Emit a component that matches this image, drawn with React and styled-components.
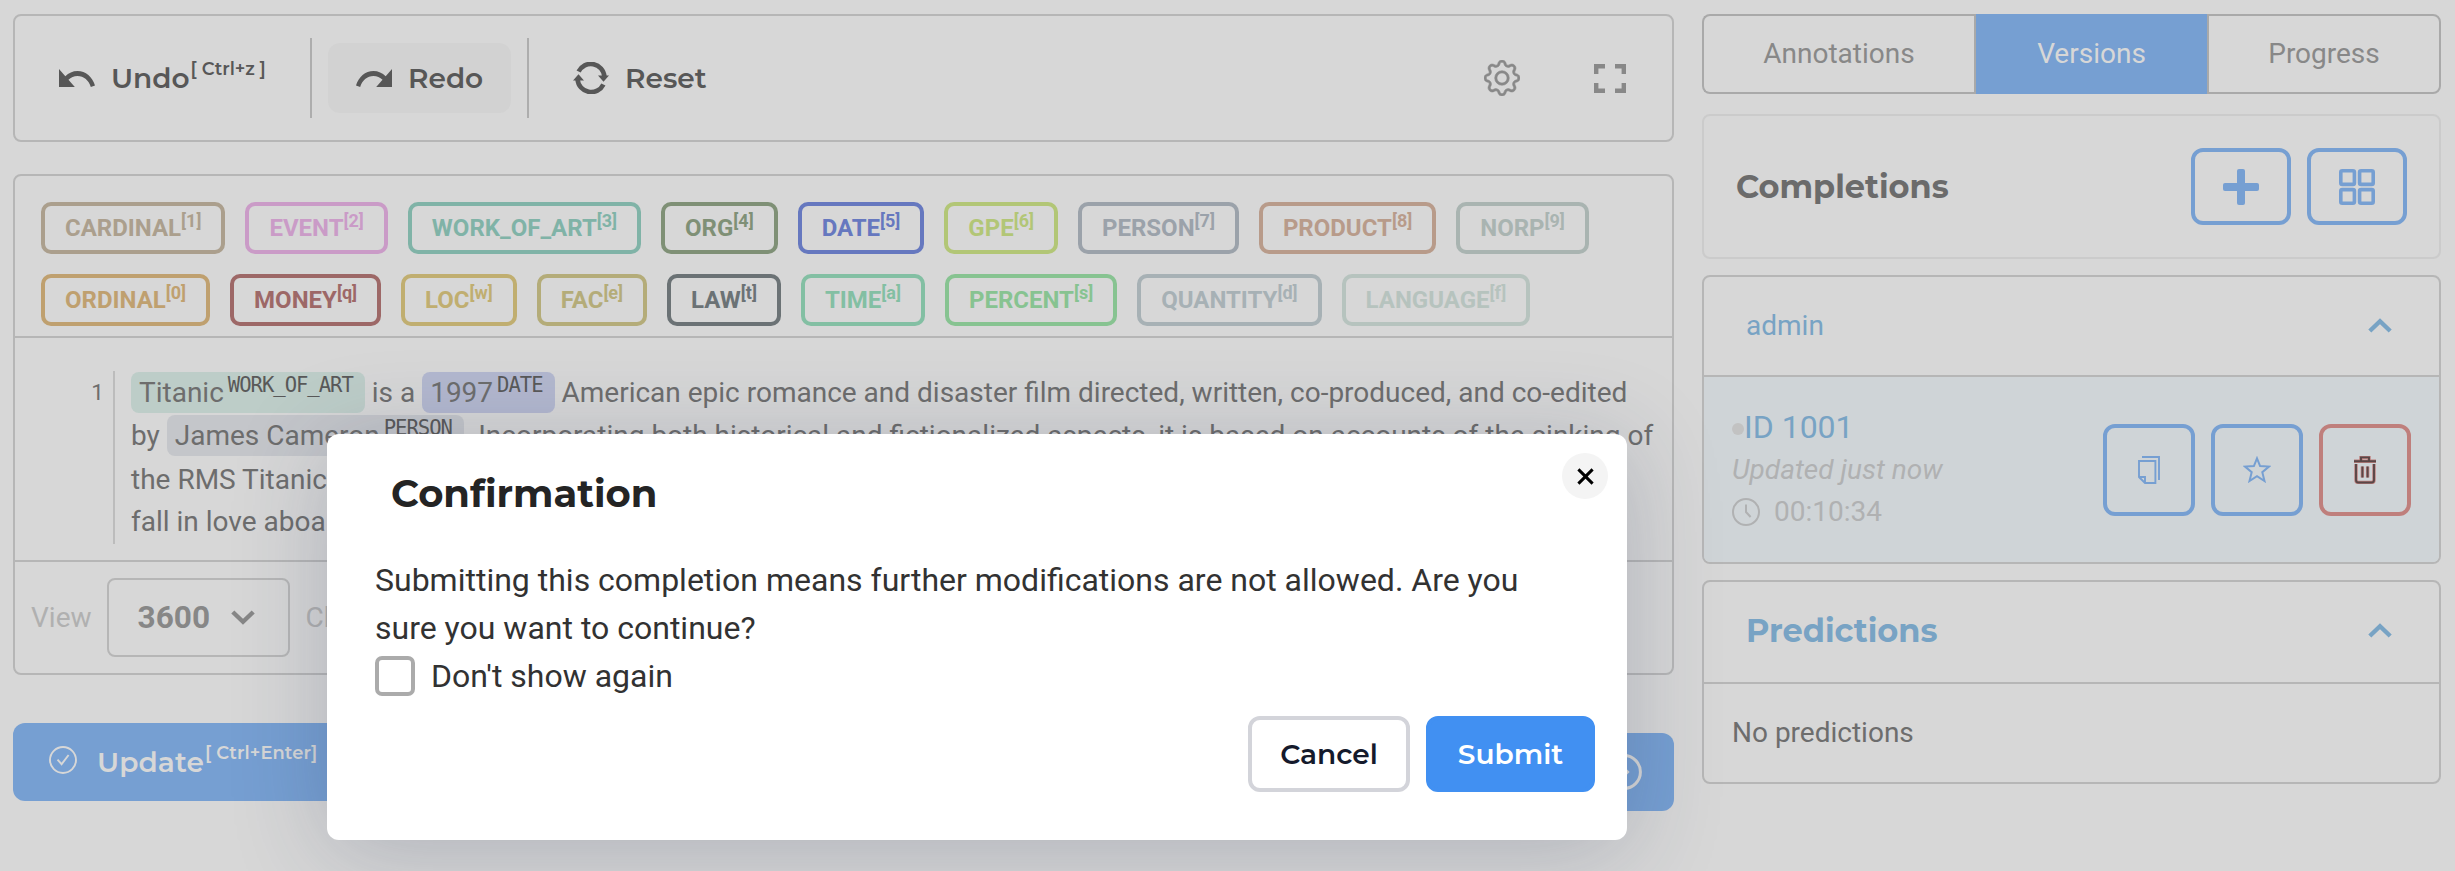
import React from "react";
import styled, { createGlobalStyle, css } from "styled-components";
import { BsGear } from "react-icons/bs";

const heading = `Montserrat, Inter, sans-serif`;
const body = `Roboto, sans-serif`;
const c = {
  page: "#d7d7d7",
  line: "#b6b6b6",
  blue: "#769fd2",
  steel: "#78a3c4",
  onBlue: "#d7d7d7",
  dark: "#575757",
  text: "#6d6d6d",
  muted: "#b0b0b0",
};

const GlobalStyle = createGlobalStyle`
  *, *::before, *::after { box-sizing: border-box; }
  body { margin: 0; background: ${c.page}; font-family: ${body}; overflow: hidden; }
  button { font: inherit; color: inherit; background: none; border: 0; padding: 0; margin: 0; }
  h1, h2, p { margin: 0; }
  svg { display: block; flex: none; }
`;

const Page = styled.div`
  position: relative;
  display: grid;
  grid-template-columns: 1661px 739px;
  column-gap: 28px;
  align-items: start;
  height: 871px;
  padding: 14px 14px 0 13px;
  overflow: hidden;
`;
const Column = styled.div`
  display: flex;
  flex-direction: column;
`;
const Panel = styled.section`
  border: 2px solid ${(p) => p.$line || c.line};
  border-radius: 8px;
`;

/* Toolbar */
const Toolbar = styled(Panel)`
  display: flex;
  align-items: center;
  height: 128px;
  padding: 0 46px 0 0;
`;
const ToolButton = styled.button`
  display: flex;
  align-items: center;
  gap: 16px;
  height: 70px;
  width: ${(p) => p.$width}px;
  margin: 0 16px;
  padding-left: 28px;
  border-radius: 12px;
  background: ${(p) => (p.$active ? "#d2d2d2" : "none")};
  color: ${c.dark};
  font: 600 28px/40px ${heading};
  white-space: nowrap;
`;
const Divider = styled.div`
  width: 2px;
  height: 80px;
  background: #adadad;
`;
const Key = styled.sup`
  position: relative;
  top: -13.5px;
  margin-left: 1px;
  font-size: ${(p) => p.$size || 17.9}px;
  font-weight: 600;
  line-height: 0;
  vertical-align: baseline;
`;
const ToolIcons = styled.div`
  display: flex;
  align-items: center;
  gap: 74px;
  margin-left: auto;
  color: #888;
`;

/* Editor */
const Editor = styled(Panel)`
  height: 501px;
  margin-top: 32px;
`;
const Labels = styled.div`
  display: flex;
  flex-direction: column;
  gap: 20px;
  padding: 26px 26px 10px;
  border-bottom: 2px solid ${c.line};
`;
const LabelRow = styled.div`
  display: flex;
  gap: 20px;
`;
const Label = styled.button`
  height: 52px;
  padding: 0 20px;
  border: 4px solid ${(p) => p.$color};
  border-radius: 10px;
  color: ${(p) => p.$color};
  font: 700 24px/44px ${body};
  sup {
    position: relative;
    top: -9px;
    font-size: 18px;
    line-height: 0;
    vertical-align: baseline;
  }
`;
const Document = styled.div`
  display: flex;
  height: 224px;
  padding-top: 32.5px;
  border-bottom: 2px solid ${c.line};
  color: ${c.text};
`;
const LineNumber = styled.div`
  width: 98px;
  padding-right: 9px;
  text-align: right;
  font-size: 22.5px;
  line-height: 43.5px;
`;
const Lines = styled.div`
  height: 173px;
  padding-left: 16px;
  border-left: 2px solid #bcbcbc;
  font-size: 28px;
`;
const Line = styled.p`
  height: 43.5px;
  line-height: 43.5px;
  white-space: nowrap;
  &:last-child { height: 42px; line-height: 42px; }
`;
const Entity = styled.span`
  padding: 4px 12px 4px 8px;
  border-radius: 8px;
  background: ${(p) => p.$bg};
  sup {
    position: relative;
    top: -10px;
    margin-left: 4px;
    color: #595959;
    font-family: "DejaVu Sans Mono", monospace;
    font-size: 20.6px;
    letter-spacing: -1.04px;
    line-height: 0;
    vertical-align: baseline;
  }
`;
const EditorFooter = styled.div`
  display: flex;
  align-items: center;
  height: 111px;
  padding-left: 16px;
  color: ${c.muted};
  font-size: 28px;
`;
const Select = styled.button`
  display: flex;
  align-items: center;
  gap: 21px;
  width: 183px;
  height: 79px;
  margin: 0 16px 0 15px;
  padding-left: 29px;
  border: 2px solid ${c.line};
  border-radius: 8px;
  color: #878787;
  font-size: 31.6px;
  font-weight: 700;
`;
const Actions = styled.div`
  display: flex;
  justify-content: space-between;
  margin-top: 48px;
`;
const ActionButton = styled.button`
  display: flex;
  align-items: center;
  justify-content: ${(p) => (p.$end ? "flex-end" : "flex-start")};
  width: ${(p) => p.$width}px;
  height: 78px;
  margin-top: ${(p) => (p.$end ? 10 : 0)}px;
  padding: 0 32px 0 36px;
  gap: 20px;
  border-radius: 12px;
  background: ${c.blue};
  color: ${c.onBlue};
  font: 600 28px/40px ${heading};
  letter-spacing: 0.1px;
  white-space: nowrap;
  svg { margin-bottom: ${(p) => (p.$end ? 0 : 4)}px; }
`;

/* Sidebar */
const Tabs = styled.div`
  display: flex;
  height: 80px;
`;
const Tab = styled.button`
  width: ${(p) => p.$width}px;
  padding-bottom: 2px;
  border: 2px solid #a9a9a9;
  color: #888;
  font-size: 28px;
  &:first-child { border-right: 0; border-radius: 8px 0 0 8px; }
  &:last-child { border-radius: 0 8px 8px 0; }
  ${(p) =>
    p.$active &&
    css`
      border-width: 0 0 0 2px;
      background: ${c.blue};
      background-clip: padding-box;
      color: ${c.onBlue};
    `}
`;
const Completions = styled(Panel)`
  display: flex;
  align-items: center;
  gap: 16px;
  height: 145px;
  margin-top: 20px;
  padding: 0 32px 0 32px;
  color: #6b6b6b;
`;
const Title = styled.h2`
  flex: 1;
  font: 700 32px/40px ${heading};
`;
const IconButton = styled.button`
  display: flex;
  align-items: center;
  justify-content: center;
  width: ${(p) => p.$w}px;
  height: ${(p) => p.$h}px;
  border: 4px solid ${(p) => p.$color || c.blue};
  border-radius: 12px;
  color: ${c.blue};
`;
const Group = styled(Panel)`
  margin-top: 16px;
  overflow: hidden;
`;
const GroupHeader = styled.header`
  display: flex;
  align-items: center;
  justify-content: space-between;
  height: ${(p) => p.$h}px;
  padding: 0 47px ${(p) => p.$lift || 0}px 42px;
  border-bottom: 2px solid ${c.line};
  color: ${c.steel};
  font-size: 28px;
`;
const Version = styled.div`
  display: flex;
  align-items: center;
  gap: 16px;
  height: 185px;
  padding: 0 28px;
  background: #cfd4d7;
`;
const VersionInfo = styled.div`
  flex: 1;
  padding-bottom: 2px;
  color: #b0b1b2;
  font-size: 28px;
`;
const VersionId = styled.div`
  display: flex;
  align-items: center;
  color: ${c.steel};
  font-size: 32px;
  line-height: 46px;
`;
const Dot = styled.span`
  width: 12px;
  height: 12px;
  margin-top: 5px;
  border-radius: 50%;
  background: #c2c2c2;
`;
const Updated = styled.div`
  font-style: italic;
  line-height: 40px;
`;
const Time = styled.div`
  display: flex;
  align-items: center;
  gap: 14px;
  line-height: 44px;
`;
const Empty = styled.div`
  height: 98px;
  padding-left: 28px;
  color: ${c.text};
  font-size: 28px;
  line-height: 97px;
`;

/* Dialog */
const Dialog = styled.div`
  position: absolute;
  left: 327px;
  top: 434px;
  width: 1300px;
  height: 406px;
  padding: 36px 32px 0 48px;
  border-radius: 12px;
  background: #fff;
  color: #323232;
  box-shadow: 0 12px 96px rgba(40, 50, 85, 0.23);
`;
const DialogTitle = styled.h1`
  padding-left: 16px;
  color: #242424;
  font: 700 38.5px/48px ${heading};
`;
const DialogText = styled.p`
  width: 1180px;
  margin-top: 38px;
  font-size: 32px;
  line-height: 48px;
`;
const CheckRow = styled.label`
  display: flex;
  align-items: center;
  gap: 16px;
  height: 48px;
  font-size: 32px;
`;
const Checkbox = styled.span`
  width: 40px;
  height: 40px;
  border: 4px solid #ababab;
  border-radius: 7px;
`;
const DialogActions = styled.div`
  display: flex;
  justify-content: flex-end;
  gap: 16px;
  margin-top: 16px;
`;
const DialogButton = styled.button`
  width: ${(p) => (p.$primary ? 169 : 162)}px;
  height: 76px;
  padding-bottom: 1px;
  border: 4px solid ${(p) => (p.$primary ? "#4190f2" : "#d3d4da")};
  border-radius: 12px;
  background: ${(p) => (p.$primary ? "#4190f2" : "#fff")};
  color: ${(p) => (p.$primary ? "#fff" : "#151a2c")};
  font: 600 28px/60px ${heading};
`;
const Close = styled.button`
  position: absolute;
  top: 19px;
  right: 19px;
  display: flex;
  align-items: center;
  justify-content: center;
  width: 46px;
  height: 46px;
  border-radius: 50%;
  background: #f4f4f4;
`;

const UndoIcon = ({ flip }) => (
  <svg width="36" height="18" viewBox="2 7 20.47 9" preserveAspectRatio="none" fill="currentColor">
    <path
      transform={flip ? "translate(24.47 0) scale(-1 1)" : undefined}
      d="M12.5 8c-2.65 0-5.05.99-6.9 2.6L2 7v9h9l-3.62-3.62c1.39-1.16 3.16-1.88 5.12-1.88 3.54 0 6.55 2.31 7.6 5.5l2.37-.78C21.08 11.03 17.15 8 12.5 8z"
    />
  </svg>
);
const ResetIcon = () => (
  <svg width="36" height="32" viewBox="0 0 36 32" fill="none">
    <g stroke="currentColor" strokeWidth="4.6">
      <path d="M5.6 9.6A13.6 13.6 0 0 1 31.4 14.5" />
      <path d="M30.4 22.4A13.6 13.6 0 0 1 4.6 17.5" />
    </g>
    <path fill="currentColor" d="M25 13.5h11l-5.5 6.2zM0 18.5h11L5.5 12.3z" />
  </svg>
);
const FullscreenIcon = () => (
  <svg width="32" height="29" viewBox="0 0 32 29" fill="none" stroke="currentColor" strokeWidth="4.4">
    <path d="M11 2.2H2.2V10M21 2.2h8.8V10M11 26.8H2.2V19M21 26.8h8.8V19" />
  </svg>
);
const PlusIcon = () => (
  <svg width="36" height="36" viewBox="0 0 36 36" fill="currentColor">
    <rect x="14" width="8" height="36" rx="2" />
    <rect y="14" width="36" height="8" rx="2" />
  </svg>
);
const GridIcon = () => (
  <svg width="36" height="36" viewBox="0 0 36 36" fill="none" stroke="currentColor" strokeWidth="3.6">
    {[1.8, 20.6].map((x) =>
      [1.8, 20.6].map((y) => <rect key={`${x}-${y}`} x={x} y={y} width="13.6" height="13.6" rx="1.5" />)
    )}
  </svg>
);
const CopyIcon = () => (
  <svg width="22" height="28" viewBox="0 0 22 28" fill="none" stroke="currentColor" strokeWidth="1.9">
    <path d="M4 1H21V24" />
    <path d="M1 5H17.4V27H7L1 21ZM1 21H7V27" />
  </svg>
);
const StarIcon = () => (
  <svg width="28" height="27" viewBox="0 0 28 27" fill="none" stroke="currentColor" strokeWidth="2">
    <path d="M14 2.3 17.1 10 26 10.6 19.3 16.2 21.5 25 14 20.2 6.5 25 8.7 16.2 2 10.6 10.9 10Z" />
  </svg>
);
const trash = "M1 5.2H23M8 5V1.4H16V5M3 8V24Q3 26.5 5.5 26.5H18.5Q21 26.5 21 24V8M9.4 10.5V21.5M14.6 10.5V21.5";
const TrashIcon = () => (
  <svg width="24" height="28" viewBox="0 0 24 28" fill="none">
    <path d={trash} stroke="#bd7f7d" strokeWidth="3.4" />
    <path d={trash} stroke="#594747" strokeWidth="1.9" />
  </svg>
);
const ClockIcon = () => (
  <svg width="28" height="28" viewBox="0 0 28 28" fill="none" stroke="currentColor" strokeWidth="2">
    <circle cx="14" cy="14" r="13" />
    <path d="M14 6.5V14L18.6 19" />
  </svg>
);
const CheckIcon = () => (
  <svg width="28" height="28" viewBox="0 0 28 28" fill="none" stroke="currentColor" strokeWidth="1.9">
    <circle cx="14" cy="14" r="13" />
    <path d="M8.5 13.6 12.6 18.2 19.6 9" />
  </svg>
);
const ArrowCircleIcon = () => (
  <svg width="36" height="36" viewBox="0 0 36 36" fill="none" stroke="currentColor" strokeWidth="3">
    <circle cx="18" cy="18" r="16.4" />
    <path d="M10 18H21M16.5 13 21.5 18 16.5 23" />
  </svg>
);
const Chevron = ({ down }) => (
  <svg width="24" height="15" viewBox="0 0 24 15" fill="none" stroke="currentColor" strokeWidth="4.4">
    <path d={down ? "M1.8 2 12 11.8 22.2 2" : "M1.8 13 12 3.2 22.2 13"} />
  </svg>
);
const CloseIcon = () => (
  <svg width="17" height="17" viewBox="0 0 17 17" stroke="#000" strokeWidth="3">
    <path d="M1.4 1.4 15.6 15.6M15.6 1.4 1.4 15.6" />
  </svg>
);

const labels = [
  [
    ["CARDINAL", "1", "#ab9f8d"],
    ["EVENT", "2", "#ca9bc7"],
    ["WORK_OF_ART", "3", "#80b3a7"],
    ["ORG", "4", "#7f9076"],
    ["DATE", "5", "#6678bf"],
    ["GPE", "6", "#b2c676"],
    ["PERSON", "7", "#9ba2aa"],
    ["PRODUCT", "8", "#b89b8a"],
    ["NORP", "9", "#a9b4b1"],
  ],
  [
    ["ORDINAL", "0", "#bfa06f"],
    ["MONEY", "q", "#9d6867"],
    ["LOC", "w", "#c0ae70"],
    ["FAC", "e", "#b4ac79"],
    ["LAW", "t", "#6b7275"],
    ["TIME", "a", "#83bfa3"],
    ["PERCENT", "s", "#87c391"],
    ["QUANTITY", "d", "#a7b1b5"],
    ["LANGUAGE", "f", "#b6c3be"],
  ],
];

export default function App() {
  return (
    <>
      <GlobalStyle />
      <Page>
        <Column>
          <Toolbar>
            <ToolButton $width={263}>
              <UndoIcon />
              <span>
                Undo<Key>[ Ctrl+z ]</Key>
              </span>
            </ToolButton>
            <Divider />
            <ToolButton $width={183} $active>
              <UndoIcon flip />
              Redo
            </ToolButton>
            <Divider />
            <ToolButton $width={190}>
              <ResetIcon />
              Reset
            </ToolButton>
            <ToolIcons>
              <BsGear size={36} strokeWidth={0.25} />
              <FullscreenIcon />
            </ToolIcons>
          </Toolbar>

          <Editor>
            <Labels>
              {labels.map((row, i) => (
                <LabelRow key={i}>
                  {row.map(([name, key, color]) => (
                    <Label key={name} $color={color}>
                      {name}
                      <sup>[{key}]</sup>
                    </Label>
                  ))}
                </LabelRow>
              ))}
            </Labels>
            <Document>
              <LineNumber>1</LineNumber>
              <Lines>
                <Line>
                  <Entity $bg="#bdcdc8">Titanic<sup>WORK_OF_ART</sup></Entity> is a{" "}
                  <Entity $bg="#b3b8cf">1997<sup>DATE</sup></Entity> American epic romance and disaster film
                  directed, written, co-produced, and co-edited
                </Line>
                <Line>
                  by <Entity $bg="#c4c6ca">James Cameron<sup>PERSON</sup></Entity>. Incorporating both historical
                  and fictionalized aspects, it is based on accounts of the sinking of
                </Line>
                <Line>
                  the RMS Titanic and stars Leonardo DiCaprio and Kate Winslet as members of different social
                  classes who
                </Line>
                <Line>fall in love aboard the ship during its maiden voyage.</Line>
              </Lines>
            </Document>
            <EditorFooter>
              <span>View</span>
              <Select>
                3600 <Chevron down />
              </Select>
              <span>Characters</span>
            </EditorFooter>
          </Editor>

          <Actions>
            <ActionButton $width={340}>
              <CheckIcon />
              <span>
                Update<Key $size={17.9}>[ Ctrl+Enter]</Key>
              </span>
            </ActionButton>
            <ActionButton $width={120} $end aria-label="Next">
              <ArrowCircleIcon />
            </ActionButton>
          </Actions>
        </Column>

        <Column>
          <Tabs>
            <Tab $width={272}>Annotations</Tab>
            <Tab $width={233} $active>Versions</Tab>
            <Tab $width={234}>Progress</Tab>
          </Tabs>
          <Completions $line="#cbcbcb">
            <Title>Completions</Title>
            <IconButton $w={100} $h={77}><PlusIcon /></IconButton>
            <IconButton $w={100} $h={77}><GridIcon /></IconButton>
          </Completions>
          <Group>
            <GroupHeader $h={100} $lift={1}>
              <span>admin</span>
              <Chevron />
            </GroupHeader>
            <Version>
              <VersionInfo>
                <VersionId><Dot />ID 1001</VersionId>
                <Updated>Updated just now</Updated>
                <Time><ClockIcon />00:10:34</Time>
              </VersionInfo>
              <IconButton $w={92} $h={92}><CopyIcon /></IconButton>
              <IconButton $w={92} $h={92}><StarIcon /></IconButton>
              <IconButton $w={92} $h={92} $color="#bf7f7c"><TrashIcon /></IconButton>
            </Version>
          </Group>
          <Group>
            <GroupHeader $h={102} $lift={3}>
              <Title>Predictions</Title>
              <Chevron />
            </GroupHeader>
            <Empty>No predictions</Empty>
          </Group>
        </Column>

        <Dialog role="dialog">
          <DialogTitle>Confirmation</DialogTitle>
          <DialogText>
            Submitting this completion means further modifications are not allowed. Are you sure you want to
            continue?
          </DialogText>
          <CheckRow>
            <Checkbox />
            Don't show again
          </CheckRow>
          <DialogActions>
            <DialogButton>Cancel</DialogButton>
            <DialogButton $primary>Submit</DialogButton>
          </DialogActions>
          <Close aria-label="Close"><CloseIcon /></Close>
        </Dialog>
      </Page>
    </>
  );
}
